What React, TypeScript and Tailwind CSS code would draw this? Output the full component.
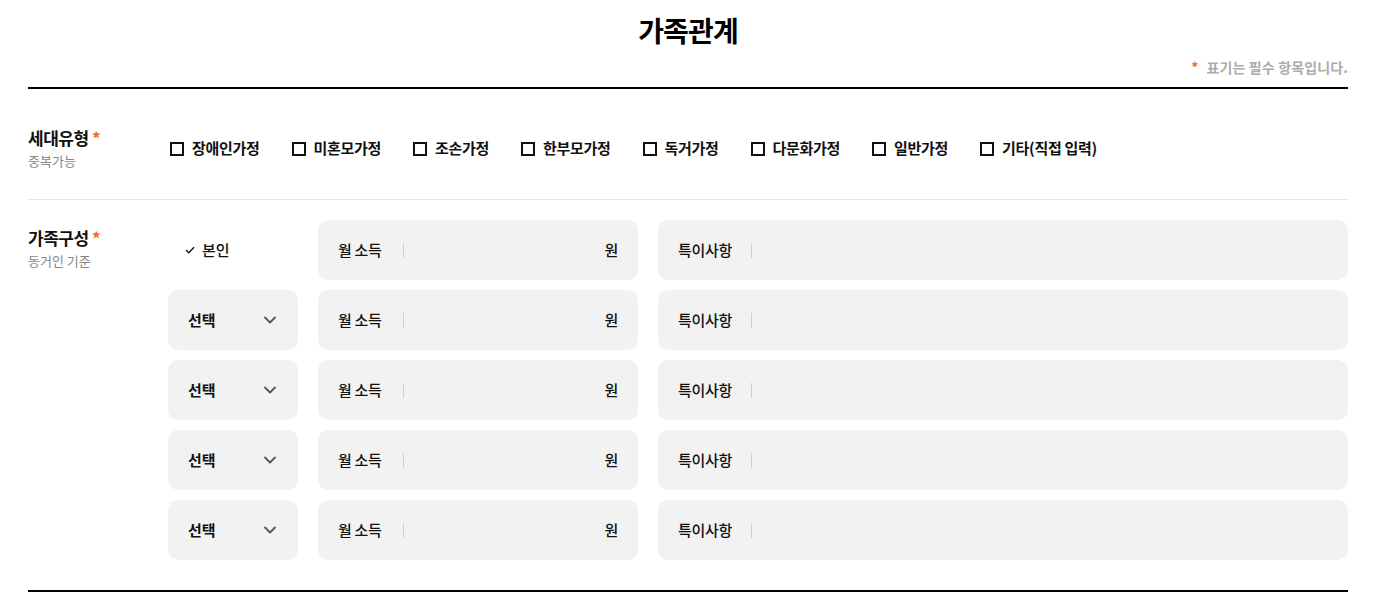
import React from "react";

const FONT = { fontFamily: '"Noto Sans CJK KR", "Noto Sans", sans-serif' };

const households = ["장애인가정", "미혼모가정", "조손가정", "한부모가정", "독거가정", "다문화가정", "일반가정", "기타(직접 입력)"];

function Chevron() {
  return (
    <svg width="14" height="14" viewBox="0 0 14 14" fill="none">
      <path d="M2 4.5 L7 9.5 L12 4.5" stroke="#555" strokeWidth="1.8" strokeLinecap="round" strokeLinejoin="round" />
    </svg>
  );
}

function IncomeBox() {
  return (
    <div className="flex h-[60px] w-[320px] items-center rounded-[10px] bg-[#f2f2f2] px-5 text-[15px] font-medium tracking-[-0.02em] text-[#111]">
      <span>월 소득</span>
      <span className="ml-[21px] h-[15px] w-px bg-[#cfcfcf]" />
      <span className="ml-auto">원</span>
    </div>
  );
}

function NoteBox() {
  return (
    <div className="flex h-[60px] flex-1 items-center rounded-[10px] bg-[#f2f2f2] px-5 text-[15px] font-medium tracking-[-0.02em] text-[#111]">
      <span>특이사항</span>
      <span className="ml-[19px] h-[15px] w-px bg-[#cfcfcf]" />
    </div>
  );
}

export default function App() {
  return (
    <div className="min-h-[609px] bg-white px-[28px] text-[#111]" style={FONT}>
      <div className="w-[1320px]">
        <h1 className="pt-[9px] text-center text-[28px] font-bold leading-[42px] tracking-[-0.03em] text-black">가족관계</h1>
        <div className="mt-[6px] flex justify-end text-[14px] font-bold leading-[20px] tracking-[0.01em] text-[#acacac]">
          <span className="mr-[8px] text-[#f26a1b]">*</span>
          <span>표기는 필수 항목입니다.</span>
        </div>
        <div className="mt-[10px] h-[2px] bg-black" />

        <div className="flex items-center border-b border-[#e6e6e6] pb-[28px] pt-[37px]">
          <div className="w-[140px] shrink-0">
            <div className="text-[17px] font-bold leading-[24px] tracking-[-0.03em]">
              세대유형 <span className="text-[#f26a1b]">*</span>
            </div>
            <div className="mt-[1px] text-[13px] leading-[20px] text-[#888]">중복가능</div>
          </div>
          <div className="flex items-center gap-[32px] pl-[2px]">
            {households.map((h) => (
              <label key={h} className="flex items-center text-[15px] font-bold tracking-[-0.02em]">
                <span className="mr-[8px] h-[14px] w-[14px] border-2 border-[#111] bg-white" />
                <span>{h}</span>
              </label>
            ))}
          </div>
        </div>

        <div className="flex border-b-2 border-black pb-[30px] pt-[20px]">
          <div className="w-[140px] shrink-0 pt-[6px]">
            <div className="text-[17px] font-bold leading-[24px] tracking-[-0.03em]">
              가족구성 <span className="text-[#f26a1b]">*</span>
            </div>
            <div className="mt-[1px] text-[13px] leading-[20px] text-[#888]">동거인 기준</div>
          </div>
          <div className="flex flex-1 flex-col gap-[10px]">
            <div className="flex gap-[20px]">
              <div className="flex h-[60px] w-[130px] items-center pl-[17px] text-[15px] font-medium">
                <svg width="10" height="8" viewBox="0 0 10 8" fill="none" className="mr-[7px]">
                  <path d="M1 4 L3.8 6.8 L9 1.2" stroke="#111" strokeWidth="1.4" />
                </svg>
                본인
              </div>
              <IncomeBox />
              <NoteBox />
            </div>
            {[0, 1, 2, 3].map((i) => (
              <div key={i} className="flex gap-[20px]">
                <div className="flex h-[60px] w-[130px] items-center justify-between rounded-[10px] bg-[#f2f2f2] pl-5 pr-[21px] text-[15px] font-bold">
                  <span>선택</span>
                  <Chevron />
                </div>
                <IncomeBox />
                <NoteBox />
              </div>
            ))}
          </div>
        </div>
      </div>
    </div>
  );
}
